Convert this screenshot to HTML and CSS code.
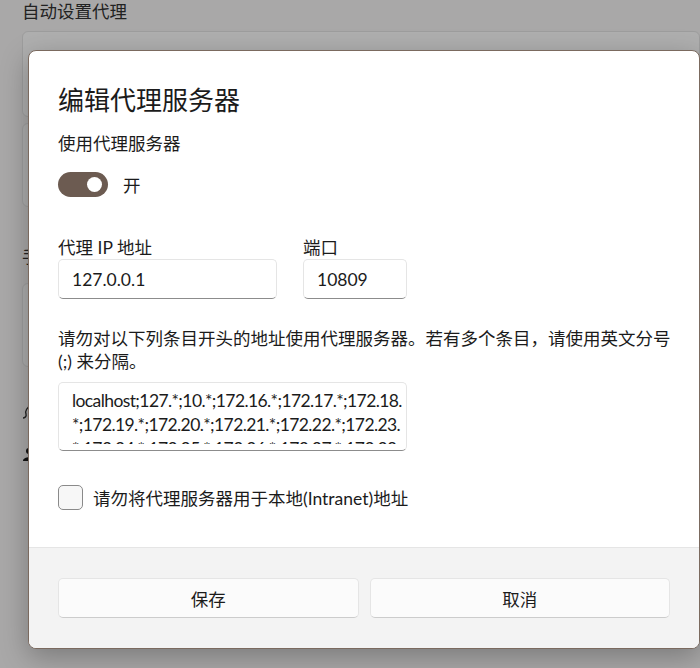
FILE: index.html
```html
<!DOCTYPE html>
<html lang="zh-CN">
<head>
    <meta charset="UTF-8">
    <meta name="viewport" content="width=device-width, initial-scale=1.0">
    <title>编辑代理服务器</title>
    <link rel="stylesheet" href="styles.css">
</head>
<body>
    <!-- 뒤쪽 설정 페이지 (어둡게 덮여 있음) -->
    <div class="page">
        <div class="page-head">自动设置代理</div>
        <div class="card card-a"></div>
        <div class="card card-b"></div>
        <div class="page-head head-2">手动设置代理</div>
        <div class="card card-c"></div>
        <div class="link-row">
            <svg width="12" height="16" viewBox="0 0 12 16"><path d="M9 2 C5 3 3 7 4 10 C5 13 2 14 1 14" fill="none" stroke="#222" stroke-width="1.4"/></svg>
        </div>
        <div class="link-row">
            <svg width="12" height="16" viewBox="0 0 12 16"><circle cx="7" cy="5" r="3" fill="#111"/><path d="M1 15 C1 10 13 10 13 15 Z" fill="#111"/></svg>
        </div>
    </div>

    <!-- 대화상자 -->
    <div class="dialog">
        <div class="dialog-body">
            <div class="dialog-title">编辑代理服务器</div>
            <div class="label use-label">使用代理服务器</div>

            <div class="toggle-row">
                <span class="toggle"><span class="knob"></span></span>
                <span class="toggle-text">开</span>
            </div>

            <div class="fields">
                <div class="field">
                    <div class="label">代理 IP 地址</div>
                    <div class="input ip">127.0.0.1</div>
                </div>
                <div class="field">
                    <div class="label">端口</div>
                    <div class="input port">10809</div>
                </div>
            </div>

            <p class="desc">请勿对以下列条目开头的地址使用代理服务器。若有多个条目，请使用英文分号<br>(;) 来分隔。</p>

            <div class="textarea">
                <div class="ta-inner">
                    localhost;127.*;10.*;172.16.*;172.17.*;172.18.<br>
                    *;172.19.*;172.20.*;172.21.*;172.22.*;172.23.<br>
                    *;172.24.*;172.25.*;172.26.*;172.27.*;172.28.
                </div>
            </div>

            <div class="check-row">
                <span class="checkbox"></span>
                <span>请勿将代理服务器用于本地(Intranet)地址</span>
            </div>
        </div>

        <div class="dialog-foot">
            <button class="btn">保存</button>
            <button class="btn">取消</button>
        </div>
    </div>
</body>
</html>
```

FILE: styles.css
```css
body{
    margin: 0;
    background: #a9a8a8;
    font-family: "Lato", "Noto Sans CJK SC", sans-serif;
    font-size: 17.5px;
    color: #1b1b1b;
    overflow: hidden;
    height: 668px;
}

/* 뒤쪽 페이지 */
.page{
    padding-left: 22px;
}
.page-head{
    line-height: 24px;
    color: #222;
}
.head-2{
    margin-top: 38px;
}
.card{
    border: 1px solid #9d9d9d;
    border-radius: 6px;
    background: #adadad;
}
.card-a{ margin-top: 7px; height: 84px; background: #afafaf; }
.card-b{ margin-top: 6px; height: 82px; }
.card-c{ margin-top: 14px; height: 82px; }
.link-row{
    margin-top: 36px;
    height: 16px;
}
.link-row + .link-row{ margin-top: 26px; }

/* 대화상자 */
.dialog{
    position: absolute;         /* 페이지 위에 덮어 씌움 */
    left: 28px;
    top: 50px;
    width: 672px;
    box-sizing: border-box;
    border: 1px solid #7b6a5f;
    border-radius: 8px;
    overflow: hidden;
    background: #fff;
    box-shadow: 0 8px 28px rgba(0, 0, 0, 0.28);
}
.dialog-body{
    padding: 32px 29px 37px 29px;
}
.dialog-title{
    font-size: 26px;
    line-height: 34px;
}
.label{
    line-height: 22px;
}
.use-label{
    margin-top: 15px;
    line-height: 24px;
}

.toggle-row{
    margin-top: 15px;
    display: flex;
    align-items: center;
    gap: 15px;
    height: 26px;
}
.toggle{
    width: 50px;
    height: 25px;
    border-radius: 13px;
    background: #6c5b51;
    display: flex;
    align-items: center;
    justify-content: flex-end;
    padding-right: 6px;
    box-sizing: border-box;
}
.knob{
    width: 15px;
    height: 15px;
    border-radius: 50%;
    background: #fff;
}

.fields{
    margin-top: 40px;
    display: flex;
    gap: 26px;
}
.input{
    height: 40px;
    box-sizing: border-box;
    border: 1px solid #e5e5e5;
    border-bottom-color: #8c8c8c;
    border-radius: 5px;
    padding: 0 13px;
    display: flex;
    align-items: center;
    background: #fff;
}
.ip{ width: 219px; }
.port{ width: 104px; }

.desc{
    margin: 28px 0 0 0;
    line-height: 23px;
    white-space: nowrap;
}

.textarea{
    margin-top: 9px;
    width: 349px;
    height: 69px;
    box-sizing: border-box;
    border: 1px solid #e5e5e5;
    border-bottom-color: #8c8c8c;
    border-radius: 5px;
    padding: 6px 0 6px 13px;
}
.ta-inner{
    height: 55px;
    overflow: hidden;
    line-height: 24px;
    white-space: nowrap;
    letter-spacing: -0.6px;
}

.check-row{
    margin-top: 34px;
    display: flex;
    align-items: center;
    gap: 10px;
    height: 25px;
}
.checkbox{
    width: 25px;
    height: 25px;
    box-sizing: border-box;
    border: 1px solid #8a8a8a;
    border-radius: 5px;
    background: #f7f7f7;
}

.dialog-foot{
    background: #f3f3f3;
    border-top: 1px solid #e5e5e5;
    padding: 30px 29px 30px 29px;
    display: flex;
    gap: 11px;
}
.btn{
    flex: 1;
    height: 40px;
    border: 1px solid #e5e5e5;
    border-bottom-color: #cccccc;
    border-radius: 5px;
    background: #fbfbfb;
    font: inherit;
    color: #1b1b1b;
}
```
